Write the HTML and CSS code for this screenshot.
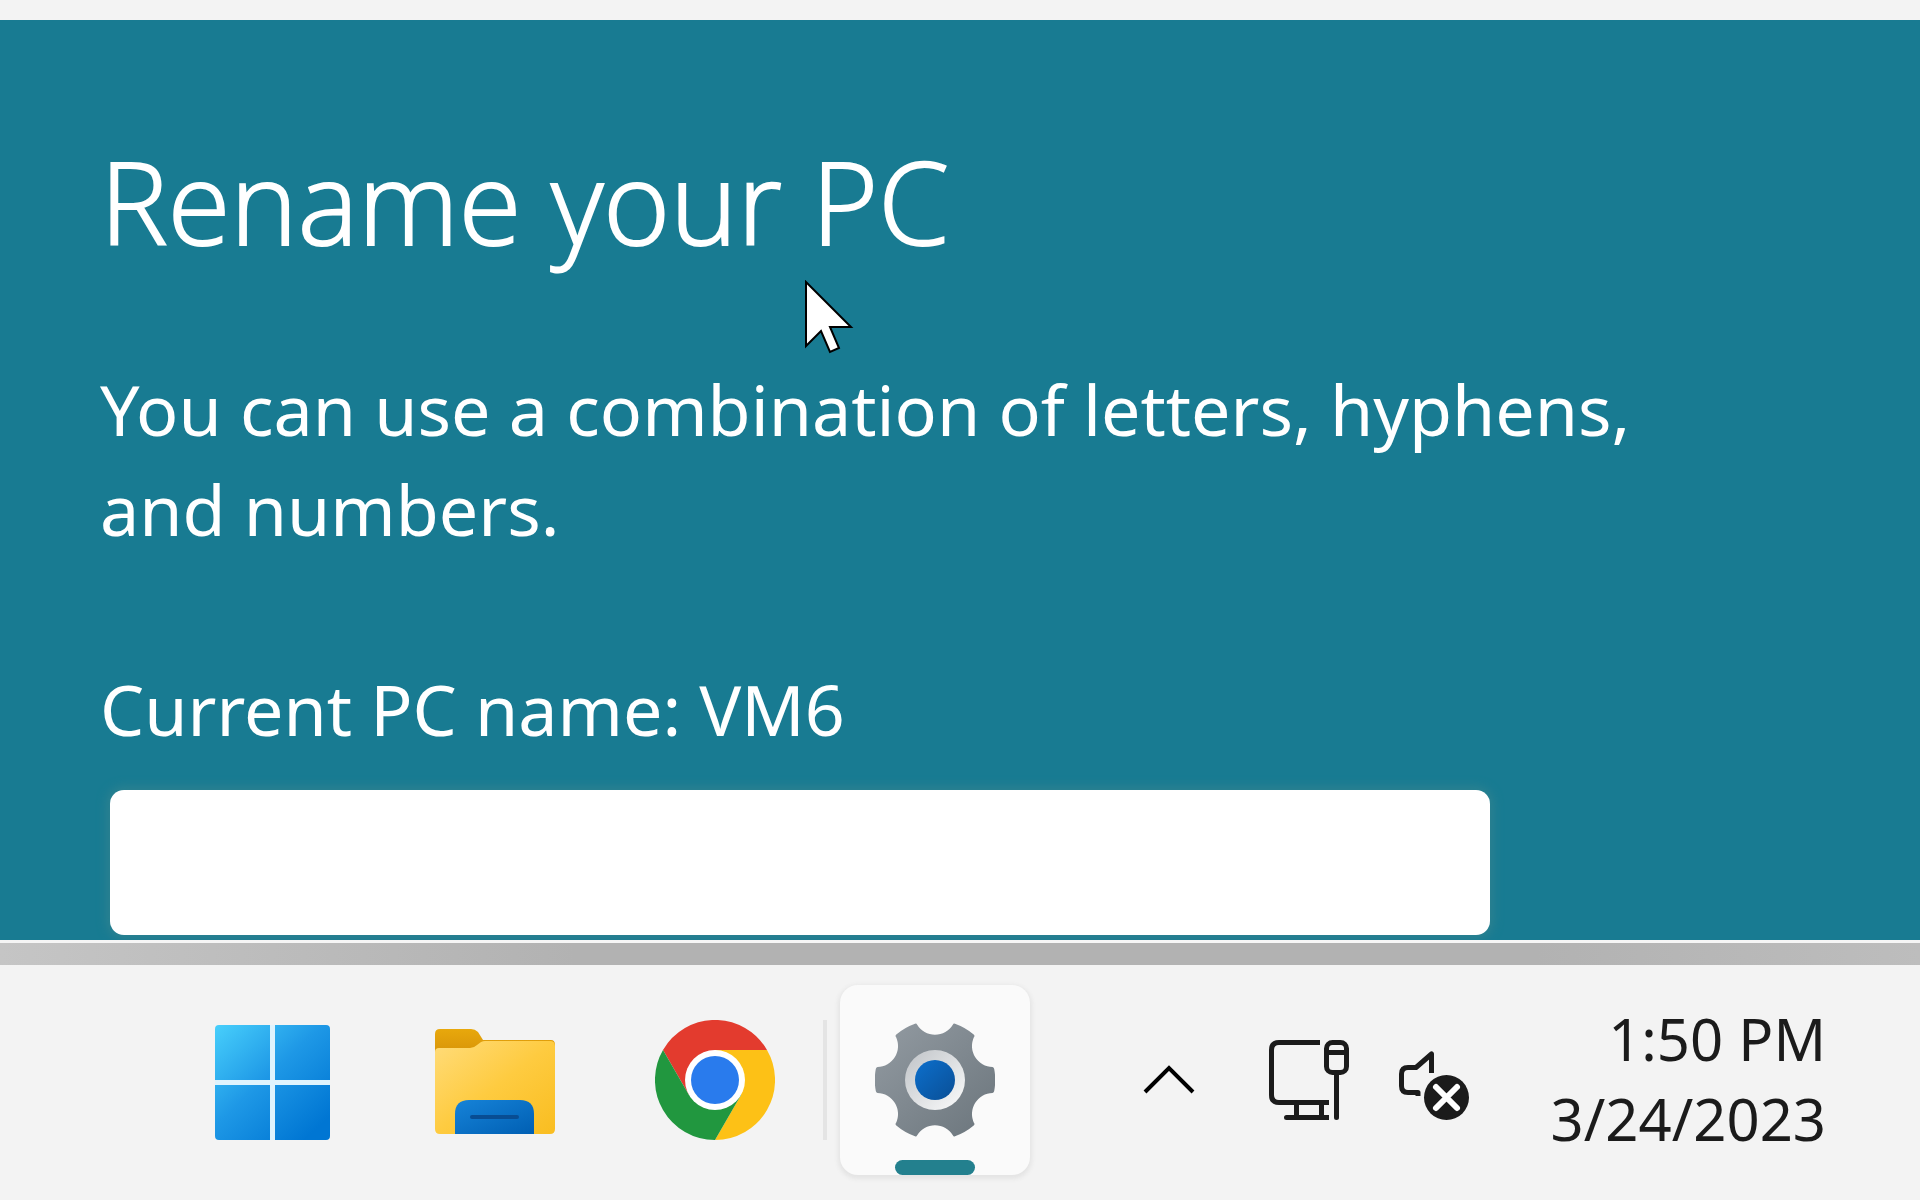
FILE: index.html
```html
<!DOCTYPE html>
<html lang="en">
<head>
<meta charset="utf-8">
<meta name="viewport" content="width=device-width, initial-scale=1">
<title>Rename your PC</title>
<link rel="stylesheet" href="styles.css">
</head>
<body>
<main class="dialog">
  <h1 class="title">Rename your PC</h1>
  <p class="text hint">You can use a combination of letters, hyphens,<br>and numbers.</p>
  <label class="text" for="pc-name">Current PC name: VM6</label>
  <input class="name-field" id="pc-name" type="text">
  <svg class="pointer" width="50" height="76" viewBox="0 0 50 76" aria-hidden="true">
    <path d="M1 2V66L16 51L25 72L34 68L25 47H46Z" fill="#fff" stroke="#000" stroke-width="2"/>
  </svg>
</main>
<div class="window-edge"></div>
<footer class="taskbar">
  <nav class="apps">
    <button class="app" type="button" aria-label="Start">
      <svg width="120" height="120" viewBox="0 0 120 120">
        <defs><linearGradient id="win" gradientUnits="userSpaceOnUse" x1="2" y1="5" x2="100" y2="110"><stop offset="0" stop-color="#47cefb"/><stop offset=".5" stop-color="#1e98e6"/><stop offset="1" stop-color="#0076d3"/></linearGradient></defs>
        <rect x="0" y="5" width="115" height="115" rx="4" fill="#dff3fd"/>
        <path fill="url(#win)" d="M4 5H55V60H0V9Q0 5 4 5ZM60 5H111Q115 5 115 9V60H60ZM0 65H55V120H4Q0 120 0 116ZM60 65H115V116Q115 120 111 120H60Z"/>
      </svg>
    </button>
    <button class="app" type="button" aria-label="File Explorer">
      <svg width="120" height="120" viewBox="0 0 120 120">
        <defs>
          <linearGradient id="fold" x1="0" y1="0" x2="1" y2="1"><stop offset="0" stop-color="#ffdc7a"/><stop offset=".5" stop-color="#fecb40"/><stop offset="1" stop-color="#f9bd20"/></linearGradient>
          <linearGradient id="tab" x1="0" y1="0" x2="0" y2="1"><stop offset="0" stop-color="#e8a80c"/><stop offset="1" stop-color="#d48f08"/></linearGradient>
          <linearGradient id="tray" x1="0" y1="0" x2="1" y2="1"><stop offset="0" stop-color="#1683d8"/><stop offset="1" stop-color="#005fb3"/></linearGradient>
        </defs>
        <path fill="url(#tab)" d="M5 9H36Q40 9 43 12L48 20H116Q120 20 120 25V40H0V14Q0 9 5 9Z"/>
        <path fill="url(#fold)" d="M4 28H35Q39 28 42 25L46 22Q48 21 50 21H115Q120 21 120 26V109Q120 114 115 114H5Q0 114 0 109V32Q0 28 4 28Z"/>
        <path fill="url(#tray)" d="M20 114V94Q20 80 34 80H85Q99 80 99 94V114Z"/>
        <path stroke="#084d93" stroke-width="4" stroke-linecap="round" d="M37 97H82"/>
      </svg>
    </button>
    <button class="app" type="button" aria-label="Google Chrome">
      <svg width="120" height="120" viewBox="-60 -60 120 120">
        <path fill="#e33b2e" d="M0 0L-26 15L-52 -30A60 60 0 0 1 52 -30H0Z"/>
        <path fill="#fdc116" d="M0 0V-30H52A60 60 0 0 1 0 60L26 15Z"/>
        <path fill="#21973f" d="M0 0L26 15L0 60A60 60 0 0 1 -52 -30L-26 15Z"/>
        <circle r="30" fill="#fff"/><circle r="24" fill="#297bed"/>
      </svg>
    </button>
    <span class="divider"></span>
    <button class="app active" type="button" aria-label="Settings">
      <svg width="120" height="120" viewBox="-60 -60 120 120">
        <defs>
          <linearGradient id="gear" x1="0" y1="0" x2="1" y2="1"><stop offset="0" stop-color="#939ba2"/><stop offset="1" stop-color="#6b757c"/></linearGradient>
          <linearGradient id="ring" x1="0" y1="0" x2="1" y2="1"><stop offset="0" stop-color="#bfc3c7"/><stop offset="1" stop-color="#fbfcfc"/></linearGradient>
          <linearGradient id="hub" x1="0" y1="0" x2="1" y2="1"><stop offset="0" stop-color="#0c6fcc"/><stop offset="1" stop-color="#0a4f96"/></linearGradient>
        </defs>
        <path fill="url(#gear)" d="M57.500 -13Q59 -12.600 59.200 -11A60 60 0 0 1 59.200 11Q59 12.600 57.500 13A21 21 0 0 0 39 43Q40 44 39 45.300A60 60 0 0 1 20 56.300Q18.500 57 18 55.500A21 21 0 0 0 -18 55.500Q-18.500 57 -20 56.300A60 60 0 0 1 -39 45.300Q-40 44 -39 43A21 21 0 0 0 -57.500 13Q-59 12.600 -59.200 11A60 60 0 0 1 -59.200 -11Q-59 -12.600 -57.500 -13A21 21 0 0 0 -39 -43Q-40 -44 -39 -45.300A60 60 0 0 1 -20 -56.300Q-18.500 -57 -18 -55.500A21 21 0 0 0 18 -55.500Q18.500 -57 20 -56.300A60 60 0 0 1 39 -45.300Q40 -44 39 -43A21 21 0 0 0 57.500 -13Z"/>
        <circle r="30" fill="url(#ring)"/><circle r="20" fill="url(#hub)"/>
      </svg>
      <span class="indicator"></span>
    </button>
  </nav>
  <div class="tray">
    <button class="tray-button chevron" type="button" aria-label="Show hidden icons">
      <svg width="52" height="80" viewBox="0 0 52 80"><path fill="none" stroke="#000" stroke-width="4" d="M2 52L26 28L50 52"/></svg>
    </button>
    <button class="tray-button network" type="button" aria-label="Network">
      <svg width="80" height="80" viewBox="0 0 80 80" fill="none" stroke="#1b1b1b" stroke-width="5">
        <path d="M51 2.500H10Q2.500 2.500 2.500 10V55Q2.500 62.500 10 62.500H60M27.500 62V77M52.500 62V77"/>
        <path d="M60 77.500H17.500"/><circle cx="17.500" cy="77.500" r="2.500" fill="#1b1b1b" stroke="none"/>
        <rect x="57.500" y="2.500" width="20" height="30" rx="6"/><path d="M58 12.500H77M67.500 33V77"/><circle cx="67.500" cy="77.500" r="2.500" fill="#1b1b1b" stroke="none"/>
      </svg>
    </button>
    <button class="tray-button volume" type="button" aria-label="Volume muted">
      <svg width="70" height="80" viewBox="0 0 70 80">
        <path fill="none" stroke="#1b1b1b" stroke-width="5" stroke-linejoin="round" d="M19 56V52.500H9Q2.500 52.500 2.500 46V34Q2.500 27.500 9 27.500H17L32.500 14V33"/>
        <circle cx="47.500" cy="57.500" r="22.500" fill="#1b1b1b"/>
        <path stroke="#fff" stroke-width="6" stroke-linecap="round" d="M37 47L58 68M58 47L37 68"/>
      </svg>
    </button>
    <button class="tray-button clock" type="button"><time datetime="2023-03-24T13:50">1:50 PM<br>3/24/2023</time></button>
  </div>
</footer>
</body>
</html>
```
FILE: styles.css
```css
* {
  box-sizing: border-box;
}

body {
  margin: 0;
  min-height: 100vh;
  display: flex;
  flex-direction: column;
  background: #f3f3f3;
  font-family: "Noto Sans", "Open Sans", sans-serif;
}

button {
  border: 0;
  padding: 0;
  background: none;
  font: inherit;
}

svg {
  display: block;
}

.dialog {
  position: relative;
  overflow: hidden;
  margin-top: 20px;
  padding: 100px 100px 5px;
  display: flex;
  flex-direction: column;
  align-items: flex-start;
  background: #187b92;
  color: #fff;
}

/* Mouse pointer, floating over the dialog */
.pointer {
  position: absolute;
  left: 805px;
  top: 260px;
}

.title {
  margin: 0;
  font-family: "Open Sans", "Noto Sans", sans-serif;
  font-size: 114px;
  line-height: 162px;
  font-weight: 300;
  -webkit-text-stroke: 2px #fff;
}

.text {
  margin: 0;
  font-size: 70px;
  line-height: 100px;
}

.hint {
  margin-top: 77px;
  margin-bottom: 100px;
}

.name-field {
  width: 1380px;
  max-width: 100%;
  height: 145px;
  margin: 31px 10px 0;
  padding: 0 30px;
  border: 0;
  border-radius: 14px;
  background: #fff;
  box-shadow: 0 0 10px 4px #2b8190;
  font: inherit;
  font-size: 70px;
}

.window-edge {
  height: 25px;
  border-top: 3px solid #f5f5f5;
  background: linear-gradient(90deg, #c5c5c5, #b2b2b2 30%, #b2b2b2 80%, #bdbdbd);
}

.taskbar {
  flex: 1;
  padding: 20px 94px 25px 165px;
  display: flex;
  justify-content: space-between;
  align-items: flex-start;
  color: #1b1b1b;
}

.apps,
.tray {
  display: flex;
  align-items: center;
}

.app {
  width: 190px;
  height: 190px;
  margin: 0 15px;
  border-radius: 18px;
  display: grid;
  grid-template-rows: 35px 120px 20px 15px;
  justify-items: center;
}

.app svg {
  grid-row: 2;
}

.active {
  background: #fafafa;
  box-shadow: 0 2px 4px 2px #e4e4e4;
}

.indicator {
  grid-row: 4;
  width: 80px;
  height: 15px;
  border-radius: 8px;
  background: #23808e;
}

.divider {
  width: 4px;
  height: 120px;
  margin: 0 -2px;
  background: #e4e4e4;
}

.tray {
  height: 190px;
}

.chevron {
  margin-right: 74px;
}

.network {
  margin-right: 50px;
}

.volume {
  margin-right: 82px;
}

.clock {
  padding-bottom: 3px;
  color: inherit;
  font-size: 58px;
  line-height: 80px;
  text-align: right;
}
```
